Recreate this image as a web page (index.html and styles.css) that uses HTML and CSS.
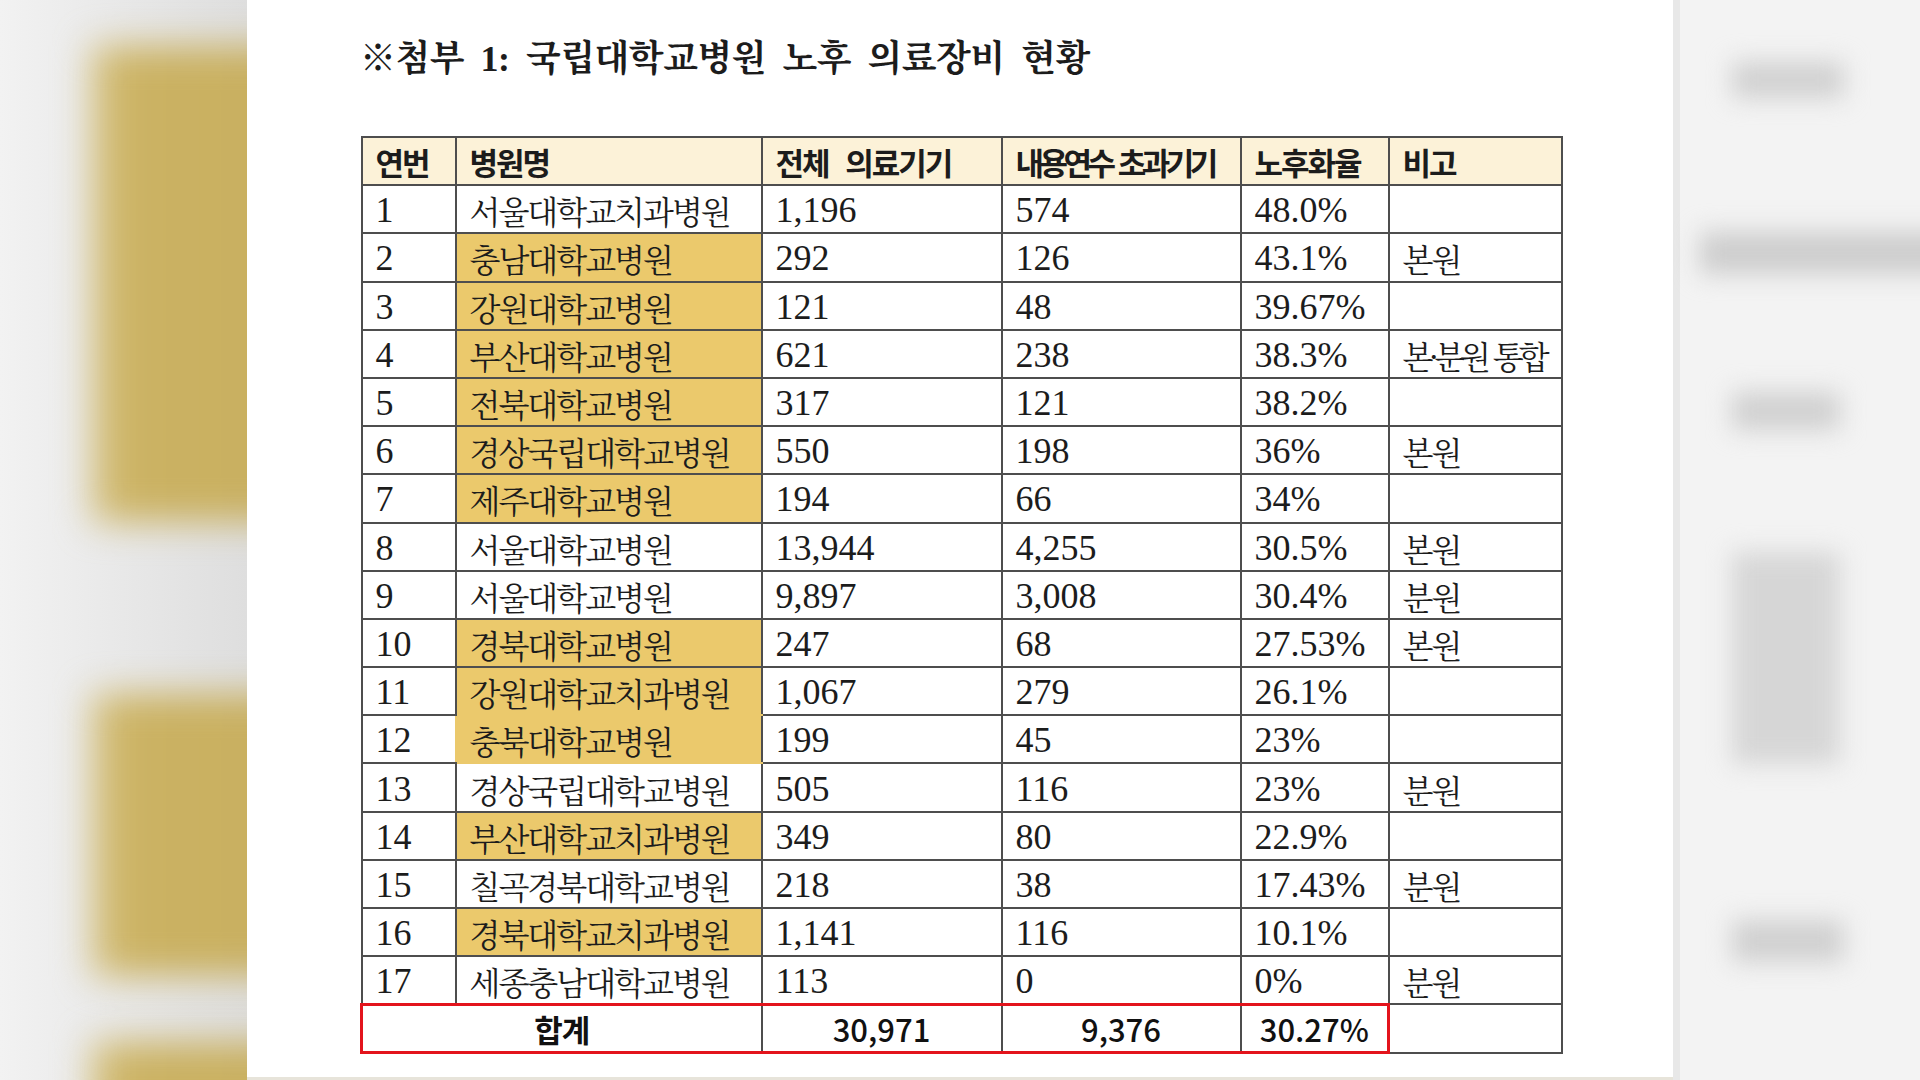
FILE: index.html
```html
<!DOCTYPE html>
<html lang="ko">
<head>
<meta charset="utf-8">
<title>국립대학교병원 노후 의료장비 현황</title>
<link rel="stylesheet" href="styles.css">
</head>
<body>
<div class="scene">
  <div class="side side-left">
    <div class="gap gap-a"></div>
    <div class="gold gold-a"></div>
    <div class="gap gap-b"></div>
    <div class="gold gold-b"></div>
    <div class="gap gap-c"></div>
    <div class="gold gold-c"></div>
  </div>

  <main class="page">
    <h1 class="title">※첨부 1: 국립대학교병원 노후 의료장비 현황</h1>
    <table class="equip">
      <colgroup>
        <col class="c-no"><col class="c-name"><col class="c-total"><col class="c-over"><col class="c-rate"><col class="c-note">
      </colgroup>
      <thead>
        <tr>
          <th>연번</th><th>병원명</th><th class="wide">전체 의료기기</th><th class="tight">내용연수 초과기기</th><th>노후화율</th><th>비고</th>
        </tr>
      </thead>
      <tbody>
        <tr><td class="num">1</td><td class="ko">서울대학교치과병원</td><td class="num">1,196</td><td class="num">574</td><td class="num">48.0%</td><td class="ko"></td></tr>
        <tr><td class="num">2</td><td class="ko hl">충남대학교병원</td><td class="num">292</td><td class="num">126</td><td class="num">43.1%</td><td class="ko">본원</td></tr>
        <tr><td class="num">3</td><td class="ko hl">강원대학교병원</td><td class="num">121</td><td class="num">48</td><td class="num">39.67%</td><td class="ko"></td></tr>
        <tr><td class="num">4</td><td class="ko hl">부산대학교병원</td><td class="num">621</td><td class="num">238</td><td class="num">38.3%</td><td class="ko squeeze">본·분원 통합</td></tr>
        <tr><td class="num">5</td><td class="ko hl">전북대학교병원</td><td class="num">317</td><td class="num">121</td><td class="num">38.2%</td><td class="ko"></td></tr>
        <tr><td class="num">6</td><td class="ko hl">경상국립대학교병원</td><td class="num">550</td><td class="num">198</td><td class="num">36%</td><td class="ko">본원</td></tr>
        <tr><td class="num">7</td><td class="ko hl">제주대학교병원</td><td class="num">194</td><td class="num">66</td><td class="num">34%</td><td class="ko"></td></tr>
        <tr><td class="num">8</td><td class="ko">서울대학교병원</td><td class="num">13,944</td><td class="num">4,255</td><td class="num">30.5%</td><td class="ko">본원</td></tr>
        <tr><td class="num">9</td><td class="ko">서울대학교병원</td><td class="num">9,897</td><td class="num">3,008</td><td class="num">30.4%</td><td class="ko">분원</td></tr>
        <tr><td class="num">10</td><td class="ko hl">경북대학교병원</td><td class="num">247</td><td class="num">68</td><td class="num">27.53%</td><td class="ko">본원</td></tr>
        <tr><td class="num">11</td><td class="ko hl hl-open-bottom">강원대학교치과병원</td><td class="num">1,067</td><td class="num">279</td><td class="num">26.1%</td><td class="ko"></td></tr>
        <tr><td class="num hl-open-right">12</td><td class="ko hl hl-open-bottom hl-open-left">충북대학교병원</td><td class="num">199</td><td class="num">45</td><td class="num">23%</td><td class="ko"></td></tr>
        <tr><td class="num">13</td><td class="ko">경상국립대학교병원</td><td class="num">505</td><td class="num">116</td><td class="num">23%</td><td class="ko">분원</td></tr>
        <tr><td class="num">14</td><td class="ko hl">부산대학교치과병원</td><td class="num">349</td><td class="num">80</td><td class="num">22.9%</td><td class="ko"></td></tr>
        <tr><td class="num">15</td><td class="ko">칠곡경북대학교병원</td><td class="num">218</td><td class="num">38</td><td class="num">17.43%</td><td class="ko">분원</td></tr>
        <tr><td class="num">16</td><td class="ko hl">경북대학교치과병원</td><td class="num">1,141</td><td class="num">116</td><td class="num">10.1%</td><td class="ko"></td></tr>
        <tr><td class="num">17</td><td class="ko">세종충남대학교병원</td><td class="num">113</td><td class="num">0</td><td class="num">0%</td><td class="ko">분원</td></tr>
      </tbody>
      <tfoot>
        <tr class="sum">
          <td class="sum-label red-left" colspan="2">합계</td>
          <td class="sum-num">30,971</td>
          <td class="sum-num">9,376</td>
          <td class="sum-num red-right">30.27%</td>
          <td class="sum-empty"></td>
        </tr>
      </tfoot>
    </table>
  </main>

  <div class="side side-right">
    <div class="edge"></div>
    <div class="bars">
      <div class="bar bar-1"></div>
      <div class="bar bar-2"></div>
      <div class="bar bar-3"></div>
      <div class="bar bar-4"></div>
      <div class="bar bar-5"></div>
    </div>
  </div>
</div>
</body>
</html>
```

FILE: styles.css
```css
html, body {
  margin: 0;
  padding: 0;
}

body {
  width: 1920px;
  height: 1080px;
  overflow: hidden;
  background: #e7e4da;
}

.scene {
  display: flex;
  width: 1920px;
  height: 1080px;
  overflow: hidden;
}

/* ---------- blurred side backgrounds ---------- */
.side {
  flex: none;
  width: 247px;
  height: 1080px;
  overflow: hidden;
  display: flex;
  flex-direction: column;
}

.side-left {
  background: linear-gradient(90deg, #f2f2f2 0%, #ececec 30%, #dedede 100%);
}

.gap { flex: none; }
.gap-a { height: 46px; }
.gap-b { height: 172px; }
.gap-c { height: 66px; }

.gold {
  flex: none;
  margin-left: 92px;
  margin-right: -60px;
  background: linear-gradient(90deg, #d5c07c 0%, #cbb263 20%, #c8af5f 100%);
  filter: blur(18px);
}
.gold-a { height: 476px; }
.gold-b { height: 282px; }
.gold-c { height: 90px; }

.side-right {
  flex-direction: row;
  background: #f3f3f3;
}

.edge {
  flex: none;
  width: 7px;
  height: 100%;
  background: #e8e8e8;
}

.bars {
  flex: 1;
  display: flex;
  flex-direction: column;
}

.bar {
  flex: none;
  background: #d0d0d0;
  filter: blur(12px);
}
.bar-1 { margin: 62px 0 0 52px; width: 112px; height: 36px; }
.bar-2 { margin: 134px -60px 0 20px; height: 42px; background: #cdcdcd; }
.bar-3 { margin: 118px 0 0 52px; width: 108px; height: 38px; }
.bar-4 { margin: 122px 0 0 52px; width: 108px; height: 212px; background: #d6d6d6; }
.bar-5 { margin: 156px 0 0 52px; width: 112px; height: 42px; }

/* ---------- page ---------- */
.page {
  flex: none;
  width: 1426px;
  height: 1077px;
  box-sizing: border-box;
  padding-left: 113px;
  background: #ffffff;
  color: #1c1c1c;
}

.title {
  margin: 37px 0 55px 0;
  font-family: "Liberation Serif", "Noto Serif CJK KR", "Noto Sans CJK KR", serif;
  font-size: 36px;
  line-height: 44px;
  font-weight: 700;
  letter-spacing: -0.5px;
  word-spacing: 8px;
  white-space: nowrap;
}

/* ---------- table ---------- */
.equip {
  border-collapse: collapse;
  table-layout: fixed;
  width: 1200px;
}

.c-no { width: 94px; }
.c-name { width: 306px; }
.c-total { width: 240px; }
.c-over { width: 239px; }
.c-rate { width: 148px; }
.c-note { width: 173px; }

.equip th,
.equip td {
  height: 48.2px;
  box-sizing: border-box;
  border: 2px solid #4e4e4e;
  padding: 2px 2px 0 13px;
  text-align: left;
  vertical-align: middle;
  white-space: nowrap;
  overflow: hidden;
}

.equip th {
  background: #fcf2d8;
  font-family: "Noto Sans CJK KR", "Noto Sans", sans-serif;
  font-size: 31px;
  font-weight: 700;
  letter-spacing: -2px;
  line-height: 40px;
}

.equip th.wide { word-spacing: 10px; }
.equip th.tight { letter-spacing: -4.5px; word-spacing: 2px; }

.num {
  font-family: "Liberation Serif", "Times New Roman", serif;
  font-size: 36px;
  line-height: 40px;
}

.ko {
  font-family: "Noto Serif CJK KR", "Noto Sans CJK KR", serif;
  font-size: 32px;
  line-height: 40px;
  letter-spacing: -2px;
}

.ko.squeeze { letter-spacing: -5px; word-spacing: 2px; }

.hl {
  background: #ebc96c;
}
.equip .hl-open-bottom { border-bottom-color: #ebc96c; }
.equip .hl-open-left { border-left-color: #ebc96c; border-top-color: #ebc96c; }
.equip .hl-open-right { border-right-color: #ebc96c; }

/* ---------- totals ---------- */
.sum td {
  font-family: "Noto Sans CJK KR", "Noto Sans", sans-serif;
  color: #111;
  padding: 2px 0 0 0;
  text-align: center;
  line-height: 40px;
}

.sum .sum-label {
  font-size: 31px;
  font-weight: 700;
  letter-spacing: -1px;
  border-top: 3px solid #e3141c;
  border-bottom: 3px solid #e3141c;
}

.sum .sum-num {
  font-size: 31px;
  font-weight: 500;
  border-top: 3px solid #e3141c;
  border-bottom: 3px solid #e3141c;
}

.sum .red-left { border-left: 3px solid #e3141c; }
.sum .red-right { border-right: 3px solid #e3141c; }
```
